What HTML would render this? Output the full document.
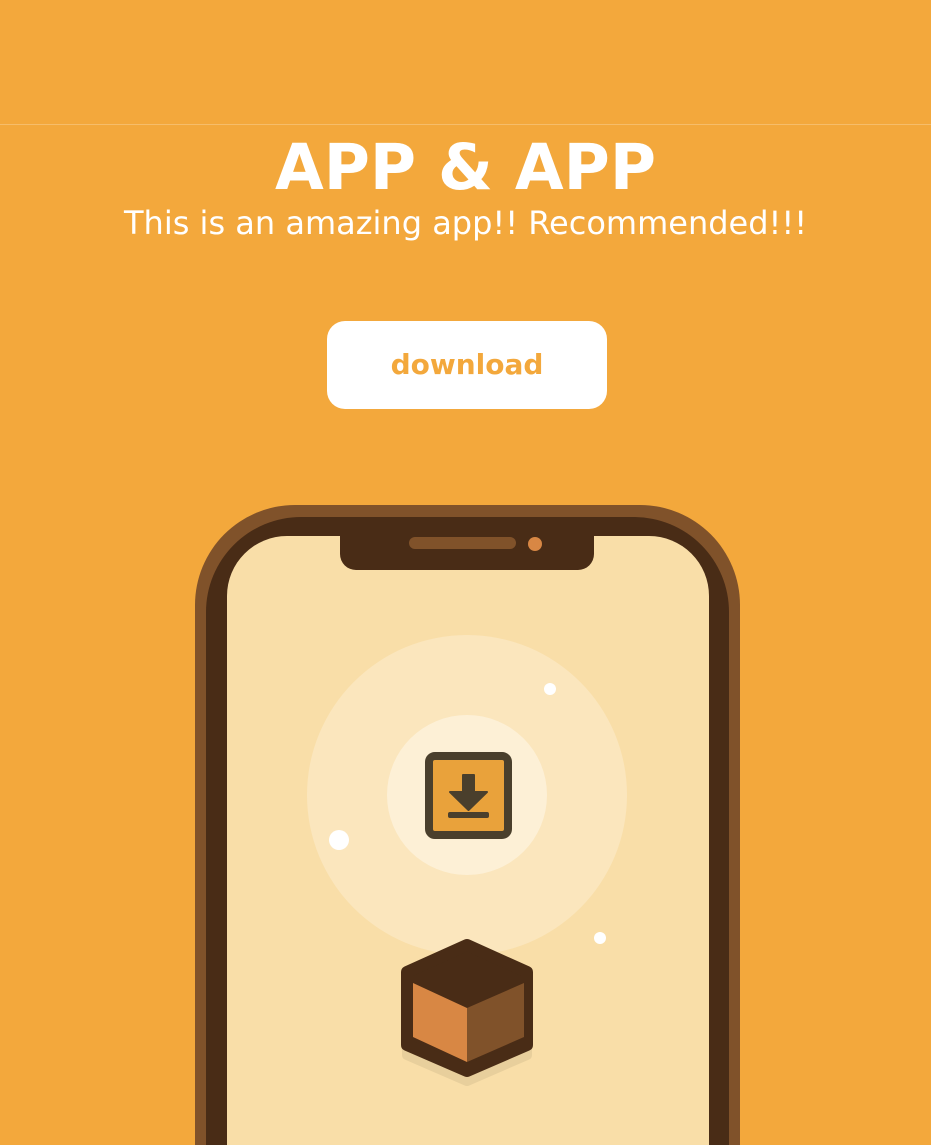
<!DOCTYPE html>
<html><head><meta charset="utf-8"><style>
html,body{margin:0;padding:0;}
body{width:931px;height:1145px;background:#f3a83c;overflow:hidden;position:relative;font-family:"DejaVu Sans","Liberation Sans",sans-serif;}
.line{position:absolute;left:0;top:124px;width:931px;height:1px;background:#f6bd6a;}
h1{position:absolute;top:128px;left:0;width:931px;margin:0;text-align:center;color:#fff;font-size:63px;font-weight:bold;line-height:80px;}
.sub{position:absolute;top:201px;left:0;width:931px;text-align:center;color:#fff;font-size:32px;line-height:44px;}
.btn{position:absolute;left:327px;top:321px;width:280px;height:88px;background:#fff;border-radius:18px;color:#f3a83c;font-weight:bold;font-size:28px;line-height:88px;text-align:center;}
svg{position:absolute;left:0;top:0;}
</style></head><body>
<div class="line"></div>
<h1>APP &amp; APP</h1>
<div class="sub">This is an amazing app!! Recommended!!!</div>
<div class="btn">download</div>
<svg width="931" height="1145" viewBox="0 0 931 1145">
<path d="M195 1145 V605 A100 100 0 0 1 295 505 H640 A100 100 0 0 1 740 605 V1145 Z" fill="#80522a"/>
<path d="M206 1145 V612 A95 95 0 0 1 301 517 H634 A95 95 0 0 1 729 612 V1145 Z" fill="#492c16"/>
<path d="M227 1145 V596 A60 60 0 0 1 287 536 H649 A60 60 0 0 1 709 596 V1145 Z" fill="#f9dea8"/>
<path d="M340 530 H594 V554 A16 16 0 0 1 578 570 H356 A16 16 0 0 1 340 554 Z" fill="#492c16"/>
<rect x="409" y="537" width="107" height="12" rx="6" fill="#80522a"/>
<circle cx="535" cy="544" r="7" fill="#d88744"/>
<circle cx="467" cy="795" r="160" fill="#fbe6bd"/>
<circle cx="467" cy="795" r="80" fill="#fdf0d6"/>
<circle cx="550" cy="689" r="6" fill="#fff"/>
<circle cx="339" cy="840" r="10" fill="#fff"/>
<circle cx="600" cy="938" r="6" fill="#fff"/>
<rect x="429" y="756" width="79" height="79" rx="6" fill="#e9a23b" stroke="#4a3f2c" stroke-width="8"/>
<path d="M463 775 H474 V792 H487 L468.5 810 L450 792 H463 Z" fill="#4a3f2c" stroke="#4a3f2c" stroke-width="2" stroke-linejoin="round"/>
<rect x="448" y="812" width="41" height="6" rx="2" fill="#4a3f2c"/>
<path d="M467 955 L527 982 L527 1055 L467 1081 L407 1055 L407 982 Z" fill="#e8cf9c" stroke="#e8cf9c" stroke-width="10" stroke-linejoin="round"/>
<path d="M467 945 L527 972 L527 1045 L467 1071 L407 1045 L407 972 Z" fill="#492c16" stroke="#492c16" stroke-width="12" stroke-linejoin="round"/>
<path d="M413 983 L467 1008 L467 1062 L413 1037 Z" fill="#d88744"/>
<path d="M467 1008 L524 983 L524 1037 L467 1062 Z" fill="#80522a"/>
</svg>
</body></html>
